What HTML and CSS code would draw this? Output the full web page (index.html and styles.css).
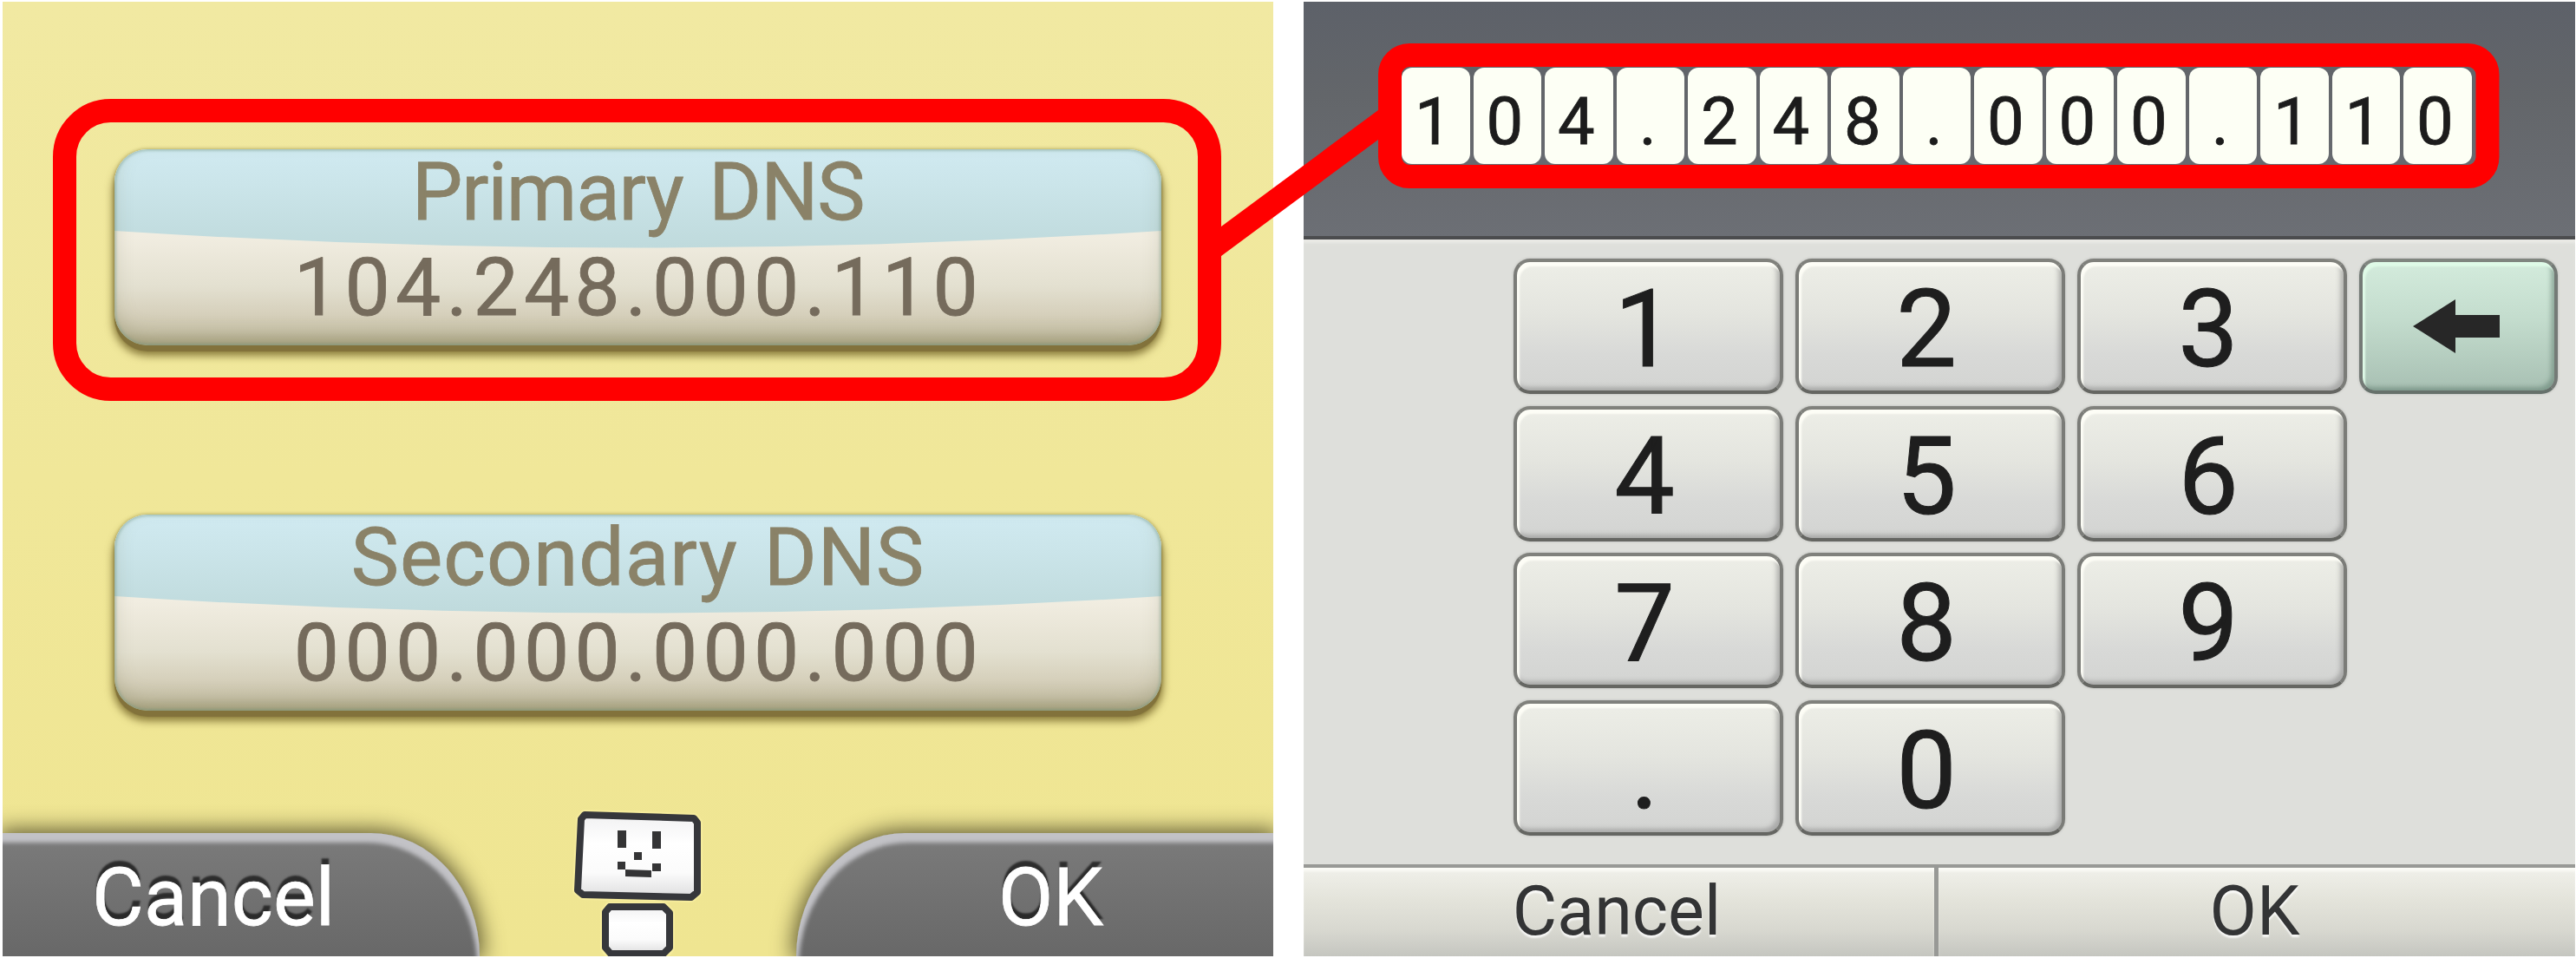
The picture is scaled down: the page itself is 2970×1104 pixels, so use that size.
FILE: index.html
```html
<!DOCTYPE html>
<html lang="en">
<head>
<meta charset="utf-8">
<title>DNS settings</title>
<link rel="stylesheet" href="styles.css">
</head>
<body>
<main class="page">
  <section class="screen settings">
    <div class="entries">
      <div class="entry">
        <svg class="entry-top" viewBox="0 0 1207 226" preserveAspectRatio="none">
          <defs><linearGradient id="blue" x1="0" y1="0" x2="0" y2="1"><stop offset="0" stop-color="#d0eaf1"/><stop offset=".35" stop-color="#cbe5ea"/><stop offset="1" stop-color="#bfdadc"/></linearGradient></defs>
          <path d="M0 0H1207V94Q603 133 0 94Z" fill="url(#blue)"/>
        </svg>
        <span class="entry-name primary">Primary DNS</span>
        <span class="entry-value">104.248.000.110</span>
      </div>
      <div class="entry">
        <svg class="entry-top" viewBox="0 0 1207 226" preserveAspectRatio="none">
          <path d="M0 0H1207V94Q603 133 0 94Z" fill="url(#blue)"/>
        </svg>
        <span class="entry-name">Secondary DNS</span>
        <span class="entry-value">000.000.000.000</span>
      </div>
    </div>
    <div class="tabs">
      <div class="tab tab-cancel">Cancel</div>
      <svg class="robot" width="160" height="172" viewBox="656 930 160 172">
        <defs>
          <linearGradient id="face" x1="0" y1="0" x2="0" y2="1"><stop offset="0" stop-color="#f1f1f2"/><stop offset=".35" stop-color="#fff"/><stop offset=".7" stop-color="#fbfbfb"/><stop offset="1" stop-color="#dededf"/></linearGradient>
        </defs>
        <g stroke="#f6ec9c" stroke-width="12" stroke-linejoin="round" fill="none">
          <path d="M674 939L800 943L804 948V1028L797 1034L672 1031L666 1026L670 944Z"/>
          <path d="M703 1045H765L772 1052V1092L765 1101H704L698 1092V1051Z"/>
        </g>
        <g stroke="#36373b" stroke-width="8" stroke-linejoin="round" fill="url(#face)">
          <path d="M674 939L800 943L804 948V1028L797 1034L672 1031L666 1026L670 944Z"/>
          <path d="M703 1045H765L772 1052V1092L765 1099H704L698 1092V1051Z"/>
        </g>
        <path fill="#343435" d="M712 957h10v20h-10zM752 958h10v20h-10zM731 982h9v9h-9zM712 993h9v9h-9zM752 995h10v9h-10zM721 1002l30 1v8l-30-1z"/>
      </svg>
      <div class="tab tab-ok">OK</div>
    </div>
  </section>

  <section class="screen keyboard">
    <div class="field">
      <span class="cell">1</span><span class="cell">0</span><span class="cell">4</span><span class="cell">.</span><span class="cell">2</span><span class="cell">4</span><span class="cell">8</span><span class="cell">.</span><span class="cell">0</span><span class="cell">0</span><span class="cell">0</span><span class="cell">.</span><span class="cell">1</span><span class="cell">1</span><span class="cell">0</span>
    </div>
    <div class="keys">
      <div class="key">1</div><div class="key">2</div><div class="key">3</div>
      <div class="key back">
        <svg width="100" height="62" viewBox="0 0 100 62"><path fill="#272727" d="M0 31L49 0V18H100V44H49V62Z"/></svg>
      </div>
      <div class="key row-start">4</div><div class="key">5</div><div class="key">6</div>
      <div class="key row-start">7</div><div class="key">8</div><div class="key">9</div>
      <div class="key row-start">.</div><div class="key">0</div>
    </div>
    <div class="actions">
      <div class="action">Cancel</div>
      <div class="action">OK</div>
    </div>
  </section>

  <svg class="callout" width="2970" height="1104" viewBox="0 0 2970 1104">
    <g fill="none" stroke="#f00" stroke-width="27">
      <rect x="74.5" y="127.5" width="1320" height="321" rx="53"/>
      <rect x="1602.5" y="63.5" width="1265.5" height="140" rx="22.5"/>
    </g>
    <path fill="#f00" d="M1404 264L1593 124V158L1404 298Z"/>
  </svg>
</main>
</body>
</html>
```
FILE: styles.css
```css
* { box-sizing: border-box; }

body {
  margin: 0;
  background: #fff;
  font-family: Roboto, "Liberation Sans", sans-serif;
}

.page {
  position: relative;
  display: flex;
  justify-content: space-between;
  width: 2970px;
  height: 1104px;
  padding: 2px 1px 2px 3px;
}

.screen {
  display: flex;
  flex-direction: column;
  height: 1100px;
  overflow: hidden;
}

/* Settings screen */
.settings {
  width: 1465px;
  background: linear-gradient(#f1e9a2, #f0e799 50%, #efe591);
}

.entries {
  display: flex;
  flex-direction: column;
  align-items: center;
  gap: 195px;
  height: 958px;
  padding-top: 170px;
}

.entry {
  position: relative;
  display: flex;
  flex-direction: column;
  align-items: center;
  width: 1207px;
  height: 226px;
  border-radius: 38px;
  background: linear-gradient(#f1ede1 44%, #e3e0d0 70%, #d5cfba 85%, #c9c3aa 93%, #b3ac8b 100%);
  box-shadow: 0 7px 1px #82723b, 0 10px 10px 2px rgba(104, 88, 30, .75), 0 0 4px rgba(120, 110, 40, .6);
}

.entry::after {
  content: "";
  position: absolute;
  inset: 0;
  border-radius: 38px;
  box-shadow: inset 0 0 3px 2px rgba(110, 150, 130, .4), inset 0 -12px 26px -6px rgba(110, 110, 70, .35);
}

.entry-top {
  position: absolute;
  inset: 0;
  width: 100%;
  height: 100%;
  border-radius: 38px;
}

.entry-name, .entry-value {
  position: relative;
  font-size: 93px;
  line-height: 100px;
  white-space: nowrap;
  -webkit-text-stroke: .8px currentColor;
}

.entry-name {
  margin-bottom: 10px;
  color: #8a8268;
  letter-spacing: 1px;
  word-spacing: 6px;
}

.entry-name.primary {
  letter-spacing: -1.2px;
  word-spacing: 8px;
}

.entry-value {
  color: #756b5c;
  letter-spacing: 6.3px;
  margin-right: -2px;
}

.tabs {
  display: flex;
  align-items: flex-end;
  justify-content: space-between;
  height: 142px;
}

.tab {
  width: 550px;
  height: 142px;
  background: linear-gradient(#7b7b7b, #686868);
  color: #fff;
  font-size: 92px;
  line-height: 149px;
  text-shadow: 0 -7px 2px rgba(20, 20, 20, .75);
  -webkit-text-stroke: .8px currentColor;
}

.tab-cancel {
  padding-left: 103px;
  border-radius: 0 134px 0 0 / 0 152px 0 0;
  box-shadow: inset -4px 12px 5px -1px #c2c2c6, 0 0 24px 4px rgba(50, 45, 20, .75);
}

.tab-ok {
  padding-left: 233px;
  border-radius: 134px 0 0 0 / 152px 0 0 0;
  box-shadow: inset 4px 12px 5px -1px #c2c2c6, 0 0 24px 4px rgba(50, 45, 20, .75);
}

.robot { flex: none; }

/* Keyboard screen */
.keyboard {
  width: 1466px;
  background: #dedfdb;
}

.field {
  display: flex;
  flex: none;
  gap: 4px;
  height: 274px;
  padding: 76px 0 0 113px;
  background: linear-gradient(#5d6169, #63666a 40%, #6c6f75);
  border-bottom: 4px solid #4b4c4e;
}

.cell {
  width: 78.5px;
  height: 111px;
  border-radius: 12px;
  background: #fdfff5;
  color: #1c1c1c;
  font-size: 76px;
  line-height: 125px;
  text-align: center;
  text-indent: -6px;
  -webkit-text-stroke: .8px currentColor;
}

.keys {
  display: grid;
  grid-template-columns: repeat(3, 311px) 229px;
  grid-auto-rows: 156px;
  gap: 13.5px 14px;
  height: 720px;
  padding: 22px 0 0 242px;
  box-shadow: inset 0 5px 3px -1px #eaeae6;
}

.key {
  border: 4px solid;
  border-color: #80817c #7b7c78 #656662;
  border-radius: 19px;
  background: linear-gradient(#edeee7, #e4e5df 40%, #d8d9d7 72%, #d3d4d2);
  box-shadow: inset 3px 5px 2px #fdfdf6, inset -4px -4px 5px rgba(120, 120, 120, .45), 0 0 3px #b5b6b2;
  color: #1e1e1e;
  font-size: 124px;
  line-height: 156px;
  text-align: center;
  text-indent: -9px;
  -webkit-text-stroke: 1px currentColor;
}

.row-start { grid-column: 1; }

.back {
  display: flex;
  align-items: center;
  justify-content: center;
  padding-right: 6px;
  border-color: #80857f #747a76 #66716b;
  background: linear-gradient(#d3ebdc, #c3dccd 45%, #a8c0b3);
  box-shadow: inset 3px 5px 2px #dffae7, inset -4px -4px 5px rgba(90, 120, 105, .5), 0 0 3px #b5b6b2;
}

.actions {
  display: flex;
  height: 106px;
  border-top: 4px solid #989996;
}

.action {
  flex: 1;
  background: linear-gradient(#f0f0ea, #e4e4db 35%, #d8d8d0 70%, #c5c6c0);
  box-shadow: inset 0 5px 3px -1px #fbfbf6;
  color: #333435;
  font-size: 79px;
  line-height: 100px;
  text-align: center;
  text-indent: -5px;
  text-shadow: 0 3px 2px rgba(255, 255, 255, .8);
}

.action:first-child {
  flex: 0 0 732px;
  border-right: 5px solid #989996;
}

/* Red outlines joining the entry to its input field */
.callout {
  position: absolute;
  top: 0;
  left: 0;
}
```
